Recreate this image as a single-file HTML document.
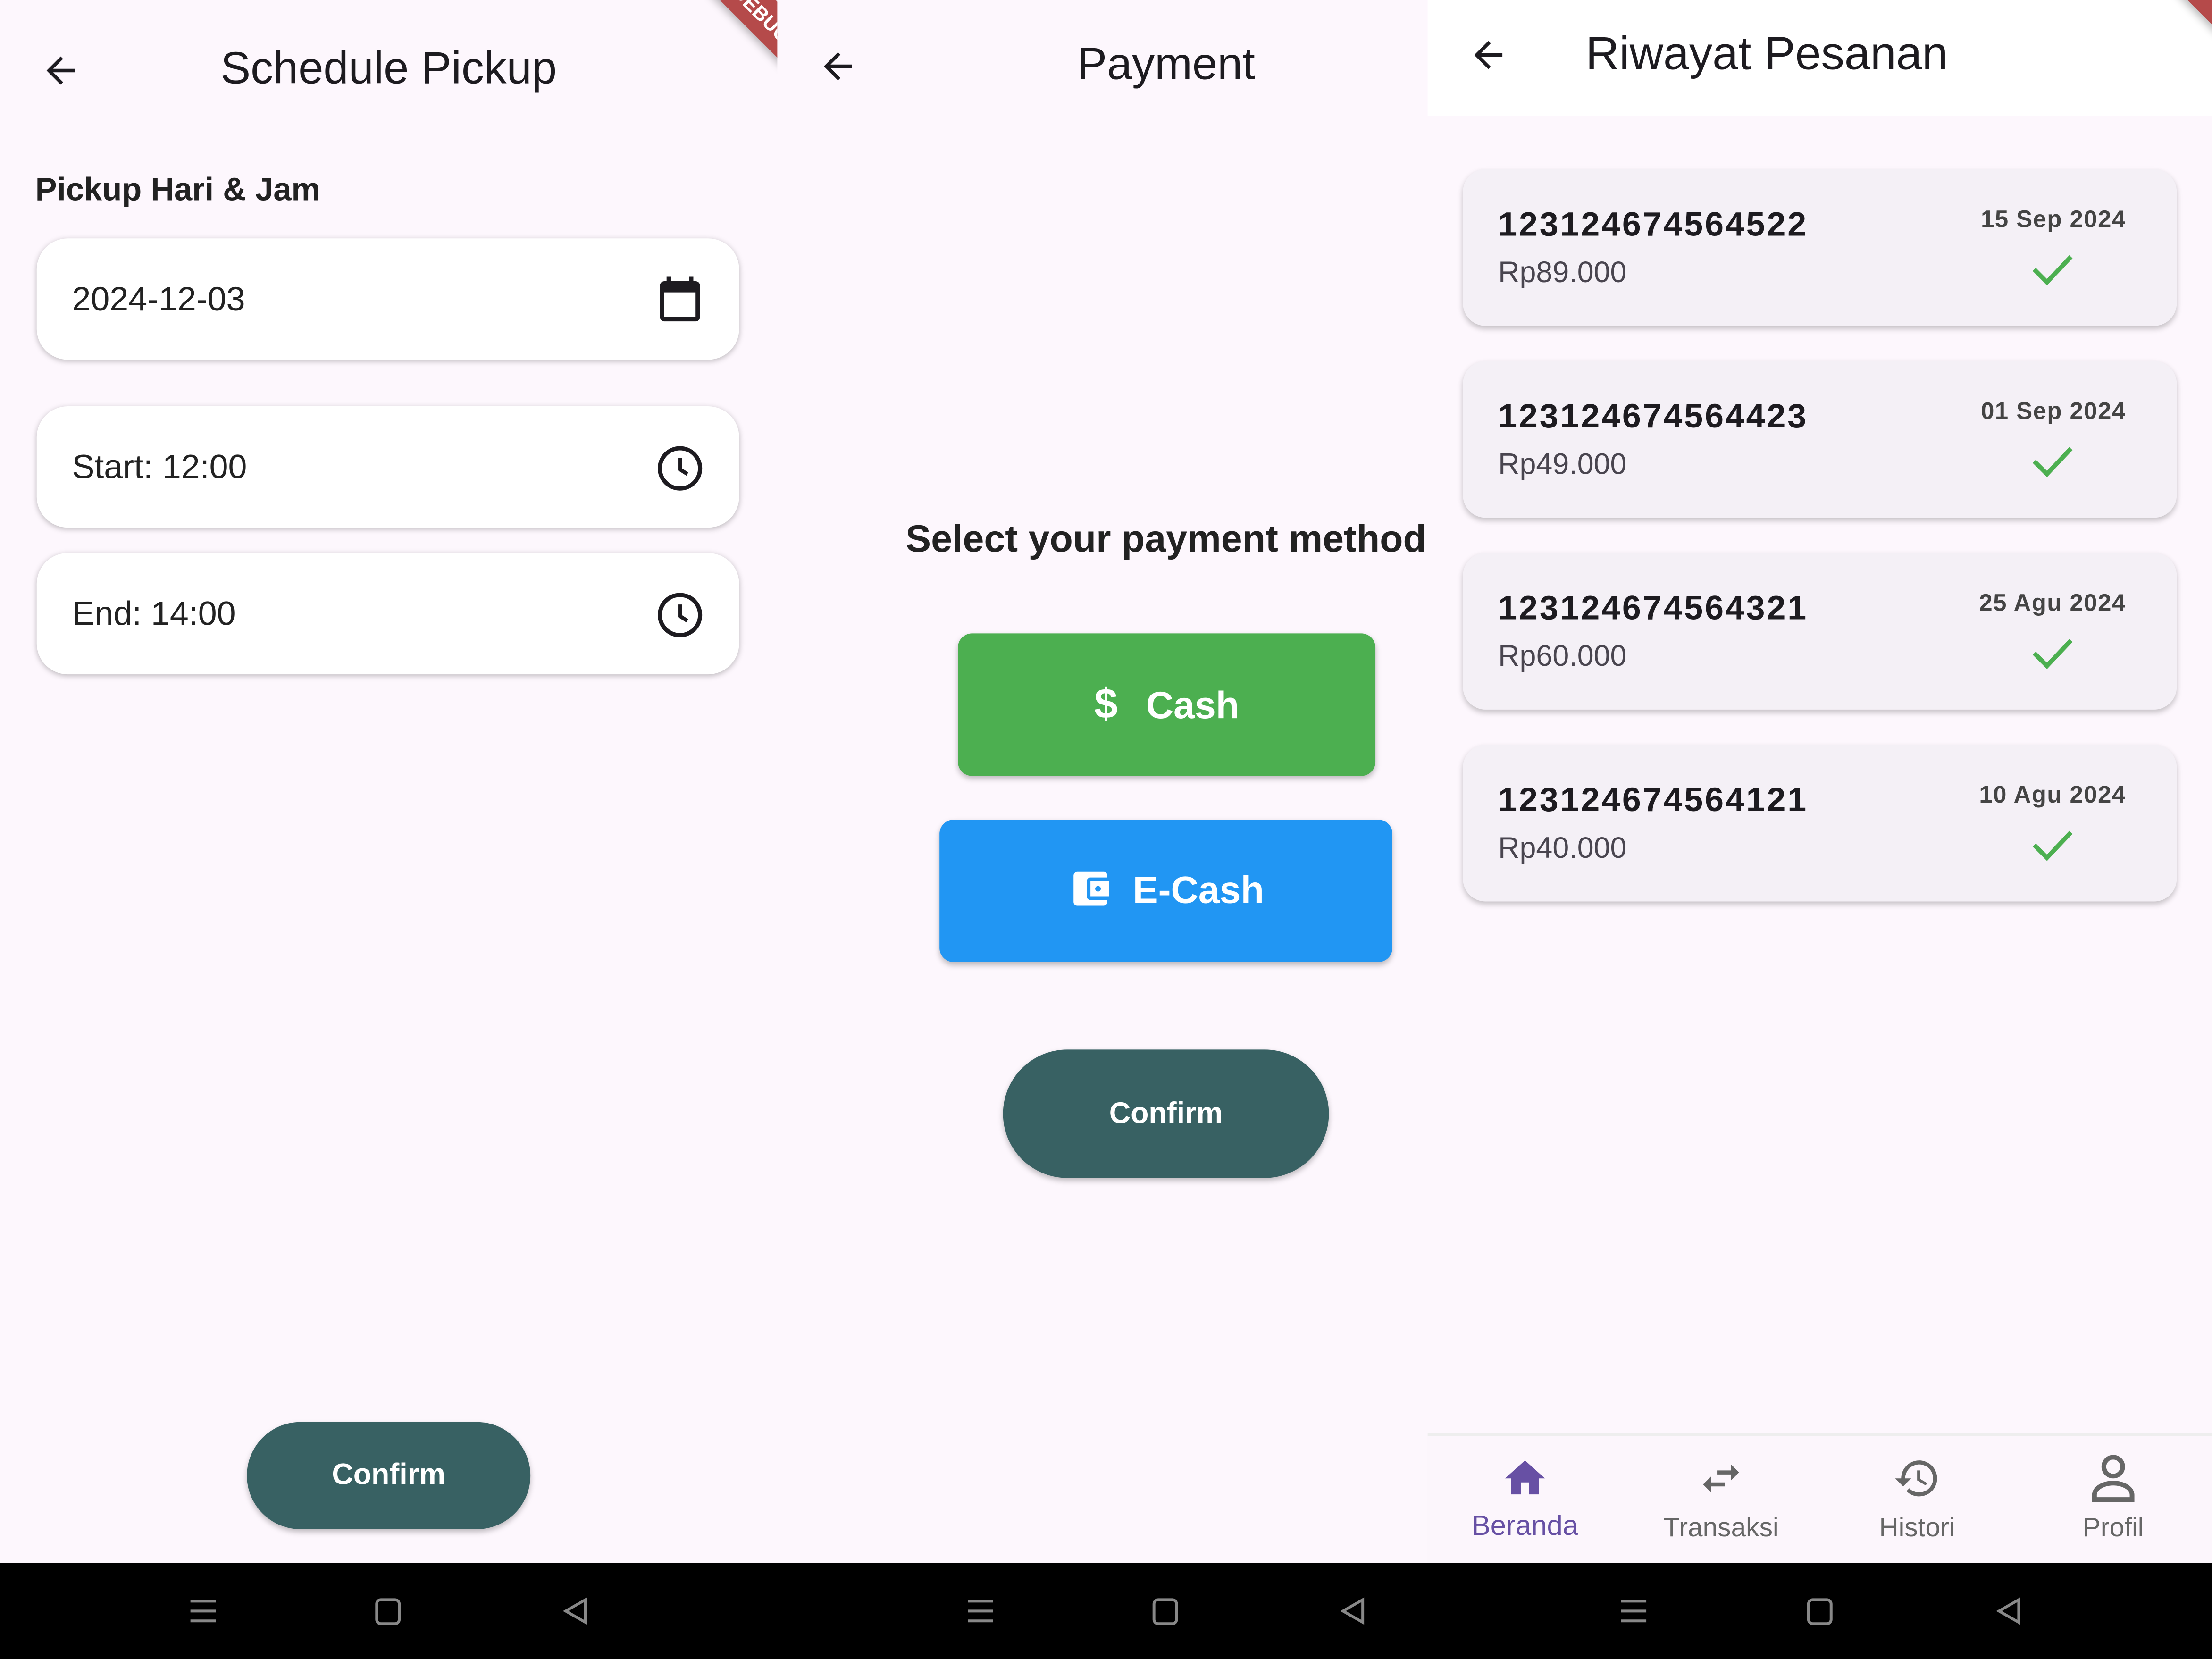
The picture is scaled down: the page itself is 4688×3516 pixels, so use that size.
<!DOCTYPE html>
<html><head><meta charset="utf-8"><style>
html,body{margin:0;padding:0;width:4688px;height:3516px;overflow:hidden;background:#fdf7fd;}
#s{position:absolute;left:0;top:0;width:1568px;height:1176px;transform:scale(2.98979);transform-origin:0 0;font-family:"Liberation Sans",sans-serif;color:#1d1b20;background:#fdf7fd;}
.a{position:absolute;}
.field{position:absolute;left:26px;width:498px;height:86px;background:#fff;border-radius:22px;box-shadow:0 1px 4px rgba(0,0,0,.25);}
.field span{position:absolute;left:25px;top:30px;font-size:24px;color:#222;}
.card{position:absolute;left:1037px;width:506px;height:111px;background:#f4f0f6;border-radius:16px;box-shadow:0 2px 4px rgba(0,0,0,.22);}
.card .n{position:absolute;left:25px;top:26px;font-size:24px;font-weight:bold;letter-spacing:1.3px;color:#1d1b20;}
.card .p{position:absolute;left:25px;top:62px;font-size:21px;color:#49454f;}
.card .d{position:absolute;right:36px;top:26px;font-size:17px;font-weight:bold;color:#444;letter-spacing:.5px;}
.card svg{position:absolute;right:72px;top:58px;}
.nav{position:absolute;font-size:19px;color:#666;text-align:center;width:140px;top:1073px;}
</style></head><body><div id="s">
<!-- Panel 1 -->
<svg class="a" style="left:28px;top:35px" width="30" height="30" viewBox="0 0 24 24"><path d="M20 11H7.8l5.6-5.6L12 4l-8 8 8 8 1.4-1.4L7.8 13H20z" fill="#1d1b20"/></svg>
<div class="a" style="left:0;width:551px;top:30px;text-align:center;font-size:32px;">Schedule Pickup</div>
<div class="a" style="left:0;top:0;width:551px;height:120px;overflow:hidden;">
<div class="a" style="left:480px;top:-4px;width:120px;height:28px;background:#b54a4a;transform:rotate(45deg);color:#fff;font-size:14px;font-weight:bold;text-align:center;line-height:28px;box-shadow:0 2px 6px rgba(0,0,0,.3)">DEBUG</div></div>
<div class="a" style="left:25px;top:121px;font-size:23px;font-weight:bold;color:#222;">Pickup Hari &amp; Jam</div>
<div class="field" style="top:169px"><span>2024-12-03</span>
<svg class="a" style="left:437px;top:24px" width="38" height="38" viewBox="0 0 24 24"><path d="M19 4h-1V2h-2v2H8V2H6v2H5c-1.1 0-2 .9-2 2v14c0 1.1.9 2 2 2h14c1.1 0 2-.9 2-2V6c0-1.1-.9-2-2-2zm0 16H5V9h14v11z" fill="#1d1b20"/></svg></div>
<div class="field" style="top:288px"><span>Start: 12:00</span>
<svg class="a" style="left:438px;top:26px" width="36" height="36" viewBox="0 0 24 24"><circle cx="12" cy="12" r="9.5" fill="none" stroke="#1d1b20" stroke-width="2"/><path d="M12 7v5.5l3.5 2.2" fill="none" stroke="#1d1b20" stroke-width="1.8"/></svg></div>
<div class="field" style="top:392px"><span>End: 14:00</span>
<svg class="a" style="left:438px;top:26px" width="36" height="36" viewBox="0 0 24 24"><circle cx="12" cy="12" r="9.5" fill="none" stroke="#1d1b20" stroke-width="2"/><path d="M12 7v5.5l3.5 2.2" fill="none" stroke="#1d1b20" stroke-width="1.8"/></svg></div>
<div class="a" style="left:175px;top:1008px;width:201px;height:76px;border-radius:38px;background:#386163;color:#fff;font-weight:bold;font-size:21px;text-align:center;line-height:76px;box-shadow:0 2px 4px rgba(0,0,0,.25)">Confirm</div>
<!-- Panel 2 -->
<svg class="a" style="left:579px;top:32px" width="30" height="30" viewBox="0 0 24 24"><path d="M20 11H7.8l5.6-5.6L12 4l-8 8 8 8 1.4-1.4L7.8 13H20z" fill="#1d1b20"/></svg>
<div class="a" style="left:651px;width:351px;top:27px;text-align:center;font-size:32px;">Payment</div>
<div class="a" style="left:621px;width:411px;top:367px;text-align:center;font-size:27px;font-weight:bold;color:#222;">Select your payment method</div>
<div class="a" style="left:679px;top:449px;width:296px;height:101px;border-radius:10px;background:#4caf50;box-shadow:0 2px 4px rgba(0,0,0,.25);color:#fff;font-size:27px;font-weight:bold;line-height:101px;text-align:center;"><span style="font-size:30px;margin-right:20px">$</span>Cash</div>
<div class="a" style="left:666px;top:581px;width:321px;height:101px;border-radius:10px;background:#2196f3;box-shadow:0 2px 4px rgba(0,0,0,.25);color:#fff;font-size:27px;font-weight:bold;line-height:101px;text-align:center;"><svg style="vertical-align:-6px;margin-right:14px" width="32" height="32" viewBox="0 0 24 24"><path d="M21 18v1c0 1.1-.9 2-2 2H5a2 2 0 0 1-2-2V5a2 2 0 0 1 2-2h14c1.1 0 2 .9 2 2v1h-9a2 2 0 0 0-2 2v8a2 2 0 0 0 2 2h9zm-9-2h10V8H12v8zm4-2.5a1.5 1.5 0 1 1 0-3 1.5 1.5 0 0 1 0 3z" fill="#fff"/></svg>E-Cash</div>
<div class="a" style="left:711px;top:744px;width:231px;height:91px;border-radius:46px;background:#386163;color:#fff;font-weight:bold;font-size:21px;text-align:center;line-height:91px;box-shadow:0 2px 4px rgba(0,0,0,.25)">Confirm</div>
<!-- Panel 3 -->
<div class="a" style="left:1012px;top:0;width:556px;height:82px;background:#fff;overflow:hidden;">
<div class="a" style="left:500px;top:-10px;width:120px;height:26px;background:#b54a4a;transform:rotate(45deg);box-shadow:0 2px 6px rgba(0,0,0,.3)"></div></div>
<svg class="a" style="left:1040px;top:24px" width="30" height="30" viewBox="0 0 24 24"><path d="M20 11H7.8l5.6-5.6L12 4l-8 8 8 8 1.4-1.4L7.8 13H20z" fill="#1d1b20"/></svg>
<div class="a" style="left:1124px;top:19px;font-size:33px;">Riwayat Pesanan</div>
<div class="card" style="top:120px"><div class="n">123124674564522</div><div class="p">Rp89.000</div><div class="d">15 Sep 2024</div><svg width="32" height="26" viewBox="0 0 32 26"><path d="M3 13l9 9L29 4" fill="none" stroke="#4caf50" stroke-width="3.2"/></svg></div>
<div class="card" style="top:256px"><div class="n">123124674564423</div><div class="p">Rp49.000</div><div class="d">01 Sep 2024</div><svg width="32" height="26" viewBox="0 0 32 26"><path d="M3 13l9 9L29 4" fill="none" stroke="#4caf50" stroke-width="3.2"/></svg></div>
<div class="card" style="top:392px"><div class="n">123124674564321</div><div class="p">Rp60.000</div><div class="d">25 Agu 2024</div><svg width="32" height="26" viewBox="0 0 32 26"><path d="M3 13l9 9L29 4" fill="none" stroke="#4caf50" stroke-width="3.2"/></svg></div>
<div class="card" style="top:528px"><div class="n">123124674564121</div><div class="p">Rp40.000</div><div class="d">10 Agu 2024</div><svg width="32" height="26" viewBox="0 0 32 26"><path d="M3 13l9 9L29 4" fill="none" stroke="#4caf50" stroke-width="3.2"/></svg></div>
<div class="a" style="left:1012px;top:1016px;width:556px;height:92px;background:#fcf6fc;border-top:2px solid #eee;"></div>
<svg class="a" style="left:1064px;top:1031px" width="34" height="34" viewBox="0 0 24 24"><path d="M10 20v-6h4v6h5v-8h3L12 3 2 12h3v8z" fill="#6750a4"/></svg>
<svg class="a" style="left:1203px;top:1031px" width="34" height="34" viewBox="0 0 24 24"><path d="M6.99 11L3 15l3.99 4v-3H14v-2H6.99v-3zM21 9l-3.99-4v3H10v2h7.01v3L21 9z" fill="#666"/></svg>
<svg class="a" style="left:1342px;top:1031px" width="34" height="34" viewBox="0 0 24 24"><path d="M13 3a9 9 0 0 0-9 9H1l3.89 3.89.07.14L9 12H6c0-3.87 3.13-7 7-7s7 3.13 7 7-3.13 7-7 7c-1.93 0-3.68-.79-4.94-2.06l-1.42 1.42A8.95 8.95 0 0 0 13 21a9 9 0 0 0 0-18zm-1 5v5l4.28 2.54.72-1.21-3.5-2.08V8H12z" fill="#666"/></svg>
<svg class="a" style="left:1478px;top:1027px" width="40" height="42" viewBox="0 0 24 24"><circle cx="12" cy="7" r="4" fill="none" stroke="#666" stroke-width="2"/><path d="M4 21v-2c0-3 4-5 8-5s8 2 8 5v2z" fill="none" stroke="#666" stroke-width="2"/></svg>
<div class="nav" style="left:1011px;top:1071px;color:#6750a4;font-size:20px">Beranda</div>
<div class="nav" style="left:1150px">Transaksi</div>
<div class="nav" style="left:1289px">Histori</div>
<div class="nav" style="left:1428px">Profil</div>
<!-- system bar -->
<div class="a" style="left:0;top:1108px;width:1568px;height:68px;background:#000;"></div>
<svg class="a" style="left:0;top:1108px" width="1568" height="68">
<g stroke="#888" stroke-width="2" fill="none">
<path d="M135 27h18M135 34h18M135 41h18"/><rect x="267" y="26" width="16" height="17" rx="3"/><path d="M415 26l-14 8 14 8z"/>
<path d="M686 27h18M686 34h18M686 41h18"/><rect x="818" y="26" width="16" height="17" rx="3"/><path d="M966 26l-14 8 14 8z"/>
<path d="M1149 27h18M1149 34h18M1149 41h18"/><rect x="1282" y="26" width="16" height="17" rx="3"/><path d="M1431 26l-14 8 14 8z"/>
</g></svg>
</div></body></html>
